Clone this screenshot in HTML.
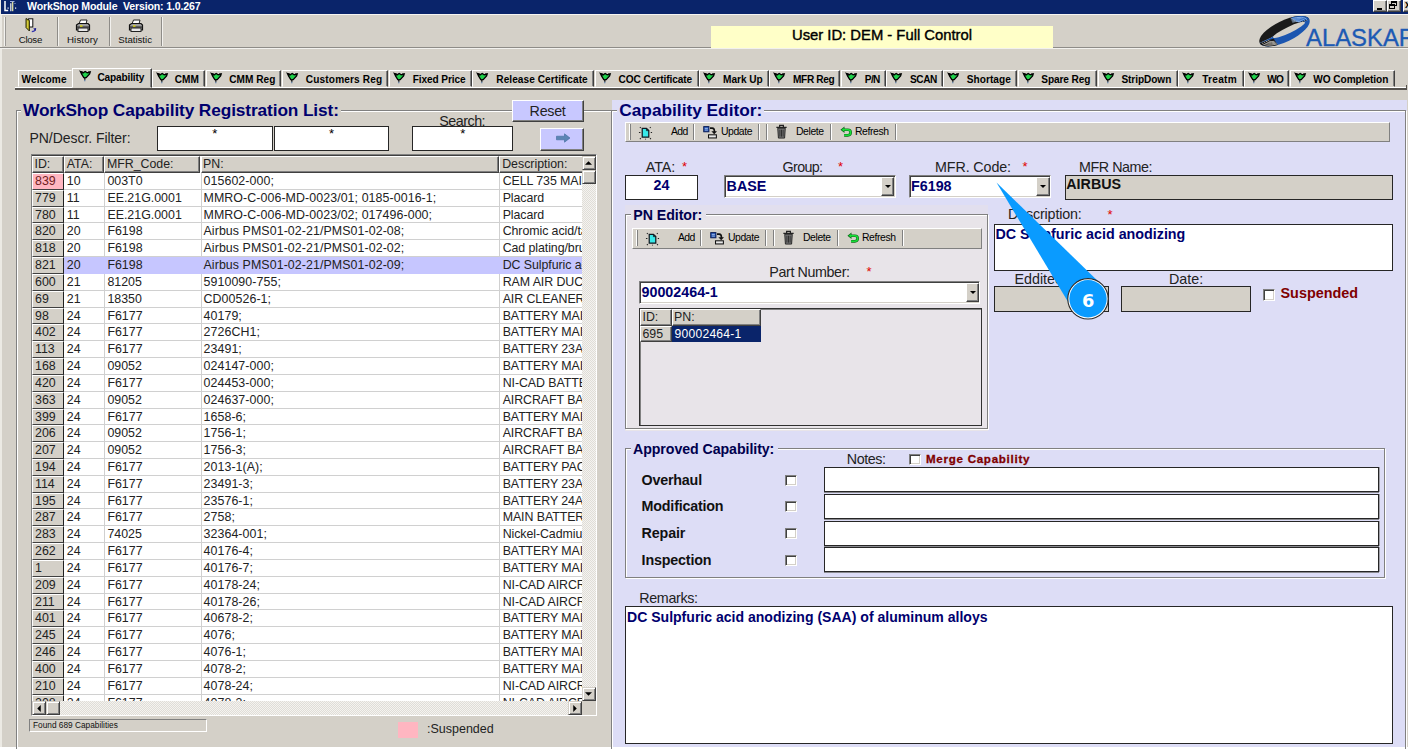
<!DOCTYPE html>
<html><head><meta charset="utf-8"><title>WorkShop Module</title>
<style>
html,body{margin:0;padding:0;background:#fff;}
#root{position:relative;width:1408px;height:749px;overflow:hidden;background:#fff;font-family:"Liberation Sans",sans-serif;font-size:12.1px;color:#000;}
#root *{box-sizing:border-box;}
#root div{position:absolute;}
#root svg{position:absolute;overflow:visible;}
.t{white-space:nowrap;line-height:1;}
.b{font-weight:bold;}
.navy{color:#00006E;}
.red{color:#E00000;}
.maroon{color:#800000;}
.face{background:#D4D0C8;}
.lav{background:#DDDDF6;}
.raised{border:1px solid;border-color:#fff #808080 #808080 #fff;}
.raised2{border:1px solid;border-color:#fff #404040 #404040 #fff;box-shadow:inset -1px -1px 0 #808080;}
.sunken{border:1px solid;border-color:#808080 #fff #fff #808080;box-shadow:inset 1px 1px 0 #404040;}
.sunk1{border:1px solid;border-color:#808080 #fff #fff #808080;}
.blk{border:1px solid #262626;}
.vsep{width:2px;border-left:1px solid #808080;border-right:1px solid #fff;}
.hsep{height:2px;border-top:1px solid #808080;border-bottom:1px solid #fff;}
.grp{border:1px solid #808080;box-shadow:1px 1px 0 #fff, inset 1px 1px 0 #fff;}
/* tabs */
.tab{top:70.4px;height:17px;background:#D4D0C8;border:1px solid;border-color:#fff #404040 transparent #fff;box-shadow:inset -1px 0 0 #808080;font-weight:bold;font-size:10.1px;white-space:nowrap;}
.tab span{position:absolute;top:3.2px;line-height:1;color:#000;}
.tab.sel{top:67.8px;height:20.4px;z-index:3;}
.tab.sel span{top:4.2px;}
.tab .flag{left:4px;top:1.2px;}
.tab.sel .flag{left:6.5px;top:2.4px;}
.tab.first{border-right-color:transparent;box-shadow:none;}
/* table */
.row{left:0;width:550px;height:16.83px;border-bottom:1px solid #D0D0D0;background:#fff;white-space:nowrap;line-height:17.6px;font-size:12.4px;color:#222;}
.row.sel{background:#C6C6FF;border-bottom-color:#C6C6FF;}
.row.sel .c{border-left-color:transparent;}
.row span{position:absolute;top:0;height:100%;overflow:hidden;padding-left:2px;}
.row .idc{left:0;width:32.3px;height:16.83px;background:#D4D0C8;border:1px solid;border-color:#fff #202020 #404040 #fff;border-right-width:1.3px;line-height:15.6px;padding-left:2px;}
.row .idc.susp{background:#FFB6C1;color:#702020;}
.row .c1{left:32.3px;width:41px;padding-left:2.5px;}
.row .c2{left:72.4px;width:97px;border-left:1px solid #D0D0D0;}
.row .c3{left:168.5px;width:298.7px;border-left:1px solid #D0D0D0;letter-spacing:0.08px;}
.row .c4{left:467.2px;width:83px;border-left:1px solid #D0D0D0;padding-left:2.5px;letter-spacing:-0.08px;}
.hdr{background:#D4D0C8;border:1px solid;border-color:#fff #404040 #404040 #fff;box-shadow:inset -1px -1px 0 #808080;font-size:12.35px;line-height:15px;padding-left:1.5px;white-space:nowrap;overflow:hidden;color:#222;}
.chk{background-color:#EAE8E4;background-image:conic-gradient(#F4F3F0 25%,#E0DDD7 0 50%,#F4F3F0 0 75%,#E0DDD7 0);background-size:2px 2px;}
.sbtn{background:#D4D0C8;border:1px solid;border-color:#D4D0C8 #404040 #404040 #D4D0C8;box-shadow:inset 1px 1px 0 #fff, inset -1px -1px 0 #808080;}
.tbtxt{font-size:10.6px;line-height:1;white-space:nowrap;}
.lbl{font-size:14.3px;line-height:1;white-space:nowrap;color:#222;}
.cb{width:12px;height:12px;background:#fff;border:1px solid;border-color:#808080 #fff #fff #808080;box-shadow:inset 1px 1px 0 #404040, inset -1px -1px 0 #D4D0C8;}
.combo{background:#fff;border:1px solid;border-color:#808080 #fff #fff #808080;box-shadow:inset 1px 1px 0 #404040, inset -1px -1px 0 #D4D0C8;}
.val{font-weight:bold;color:#00006E;font-size:14.3px;line-height:1;white-space:nowrap;}
.nb{box-shadow:0 1px 0 #8a8a90, 1px 0 0 #a0a0a8;}
</style></head>
<body>
<div id="root">

<!-- window frame / background -->
<div class="face" style="left:0;top:0;width:1408px;height:747.3px"></div>
<div style="left:0;top:0;width:1.5px;height:747px;background:#ECEAE4"></div>
<!-- title bar -->
<div style="left:1px;top:0;width:1407px;height:13.6px;background:#0A246A"></div>
<svg style="left:3px;top:0" width="15" height="13" viewBox="0 0 15 13"><path d="M2 1 V10.6 H5.2" stroke="#fff" stroke-width="1.5" fill="none"/><path d="M9.6 1.2 V11.2" stroke="#D8D8A0" stroke-width="1.5"/><path d="M7.8 3.2 V11.2" stroke="#fff" stroke-width="1.1"/><path d="M7 1.5 h4.5" stroke="#9fb0e0" stroke-width="1"/><rect x="4.5" y="7.5" width="1.2" height="1.2" fill="#fff"/><rect x="12" y="7.5" width="1.2" height="1.2" fill="#fff"/><rect x="11.5" y="3" width="1" height="1" fill="#9fb0e0"/></svg>
<div class="t b" id="title" style="left:27px;top:1px;color:#fff;font-size:10.6px;letter-spacing:-0.16px">WorkShop Module&nbsp; Version: 1.0.267</div>
<!-- window buttons -->
<div class="face raised2" style="left:1373px;top:0;width:14px;height:11.5px"></div>
<div style="left:1377px;top:7.8px;width:5px;height:2px;background:#000"></div>
<div class="face raised2" style="left:1387px;top:0;width:14px;height:11.5px"></div>
<div style="left:1391px;top:1px;width:6px;height:5px;border:1px solid #000;border-top-width:2px"></div>
<div style="left:1389px;top:4px;width:6px;height:5px;border:1px solid #000;border-top-width:2px;background:#D4D0C8"></div>
<div class="face raised2" style="left:1403px;top:0;width:13px;height:11.5px"></div>
<div class="t b" style="left:1405px;top:0px;font-size:10px;">x</div>
<div style="left:0;top:13.6px;width:1408px;height:1.9px;background:#F6F5F2"></div>

<!-- main toolbar -->
<div class="vsep" style="left:3.8px;top:17px;height:29px;border-left-color:#f4f3f0;border-right-color:#9a9894"></div>
<div class="vsep" style="left:57px;top:17px;height:29px;border-left-color:#8e8c88;border-right-color:#f2f1ee"></div>
<div class="vsep" style="left:109px;top:17px;height:29px;border-left-color:#8e8c88;border-right-color:#f2f1ee"></div>
<div class="vsep" style="left:161px;top:17px;height:29px;border-left-color:#8e8c88;border-right-color:#f2f1ee"></div>
<div class="hsep" style="left:0;top:47px;width:1408px;border-top-color:#8e8c88;border-bottom-color:#f2f1ee"></div>
<!-- close icon -->
<svg style="left:24px;top:17px" width="16" height="17" viewBox="0 0 16 17"><rect x="4.6" y="1.8" width="4.2" height="8.2" fill="#fff" stroke="#111" stroke-width="1"/><path d="M2 1.5 L5.4 3.4 V14 L2 10.6 Z" fill="#B4AC1C" stroke="#2a2a10" stroke-width="1"/><path d="M3.6 4 V11" stroke="#e0d850" stroke-width="0.8"/><path d="M7.8 14.6 q3 0 3.6 -2.4" stroke="#3838B0" stroke-width="1.3" fill="none"/><path d="M9.2 11.6 l3 -0.6 l-0.4 3 Z" fill="#202090"/></svg>
<div class="t" style="left:18.8px;top:35px;font-size:9.7px;color:#111;letter-spacing:-0.32px">Close</div>
<!-- printer icons -->
<svg style="left:75px;top:19px" width="16" height="14" viewBox="0 0 16 14"><path d="M4 5 L5.5 1 H12 L11 5 Z" fill="#fff" stroke="#222" stroke-width="1"/><path d="M1.5 6 L3.5 4.5 H13 L14.5 6 V11 H1.5 Z" fill="#9C9C9C" stroke="#111" stroke-width="1.2"/><path d="M1.5 8 H14.5" stroke="#222" stroke-width="1"/><rect x="3" y="9" width="10" height="3.5" fill="#E8E8E8" stroke="#222" stroke-width="1"/><rect x="5" y="6.4" width="2.5" height="1.3" fill="#E8E000"/></svg>
<div class="t" style="left:67px;top:35px;font-size:9.7px;color:#111;letter-spacing:0.12px">History</div>
<svg style="left:128px;top:19px" width="16" height="14" viewBox="0 0 16 14"><path d="M4 5 L5.5 1 H12 L11 5 Z" fill="#fff" stroke="#222" stroke-width="1"/><path d="M1.5 6 L3.5 4.5 H13 L14.5 6 V11 H1.5 Z" fill="#9C9C9C" stroke="#111" stroke-width="1.2"/><path d="M1.5 8 H14.5" stroke="#222" stroke-width="1"/><rect x="3" y="9" width="10" height="3.5" fill="#E8E8E8" stroke="#222" stroke-width="1"/><rect x="5" y="6.4" width="2.5" height="1.3" fill="#E8E000"/></svg>
<div class="t" style="left:118.3px;top:35px;font-size:9.7px;color:#111;letter-spacing:-0.03px">Statistic</div>

<!-- user id bar -->
<div style="left:711px;top:26px;width:342px;height:21.6px;background:#FFFFC8"></div>
<div class="t" style="left:711px;top:27.5px;width:342px;text-align:center;font-size:14.8px;color:#000;-webkit-text-stroke:0.4px #000">User ID: DEM - Full Control</div>

<!-- logo -->
<svg style="left:1255px;top:14px" width="153" height="34" viewBox="0 0 153 34">
<g transform="translate(29.5,17.2) rotate(-25.5)">
<path d="M-27.5 0 A27.5 10.6 0 0 1 27.5 0 Z" fill="#1a1a1a"/>
<path d="M27.5 0 A27.5 10.6 0 0 1 -27.5 0 Z" fill="#1C56B0"/>
<path d="M-27.5 0 A27.5 10.6 0 0 0 -12 9.5 L-13 2 Z" fill="#1a1a1a"/>
<path d="M27.5 0 A27.5 10.6 0 0 0 12 -9.5 L16 -2 Z" fill="#1C56B0"/>
<path d="M-25.4 0.5 A25.4 9.4 0 0 0 -12 8.4 M-23.2 0.6 A23.2 8.2 0 0 0 -12.5 7.2 M-21 0.7 A21 7 0 0 0 -13 6 M-18.8 0.8 A19 5.8 0 0 0 -13.5 4.8" stroke="#D4D0C8" stroke-width="0.65" fill="none"/>
<path d="M25.4 -0.5 A25.4 9.4 0 0 0 11 -8.5 M23.2 -0.6 A23.2 8.2 0 0 0 11 -7.2 M21 -0.7 A21 7 0 0 0 11 -6 M18.8 -0.8 A19 5.8 0 0 0 11 -4.8" stroke="#A8CCF8" stroke-width="0.65" fill="none"/>
<ellipse cx="4.6" cy="0.8" rx="17.6" ry="3.1" fill="#D4D0C8"/>
</g>
<text x="51" y="32.3" font-family="'Liberation Sans',sans-serif" font-size="24" fill="#1C5AB4" textLength="110" lengthAdjust="spacingAndGlyphs" stroke="#1C5AB4" stroke-width="0.35">ALASKAR</text>
</svg>

<!-- tab strip -->
<div style="left:15px;top:87px;width:1391px;height:1px;background:#fff"></div>
<div style="left:15px;top:88.2px;width:1392px;height:1.8px;background:#55524e"></div>
<div style="left:1405.5px;top:85px;width:1.5px;height:5px;background:#55524e;"></div>
<div class="tab first" style="left:17.5px;width:54.1px"><span style="left:3.0px;letter-spacing:0.15px">Welcome</span></div>
<div class="tab sel" style="left:72.2px;width:79.6px"><svg class="flag" width="11" height="11" viewBox="0 0 11 11"><path d="M0.5 0.6 L3 1.9 L5.2 0.5 L7.2 1.9 L10.2 0.9 L9.6 3 L6.2 6.6 L3.8 6.6 L1.8 3.4 Z" fill="#1FD04A" stroke="#000" stroke-width="1.3" stroke-linejoin="miter"/><path d="M0.3 0.3 h2.4 v1.6 h-1.4 Z M10.4 0.6 h-2.4 v1.6 h1.6 Z" fill="#000"/><path d="M4.8 6 V8.8" stroke="#111" stroke-width="1.4"/><path d="M4.8 8.8 V10.2" stroke="#5878A0" stroke-width="1.2"/></svg><span style="left:24.3px;letter-spacing:-0.16px">Capability</span></div>
<div class="tab" style="left:152.2px;width:52.7px"><svg class="flag" width="11" height="11" viewBox="0 0 11 11"><path d="M0.5 0.6 L3 1.9 L5.2 0.5 L7.2 1.9 L10.2 0.9 L9.6 3 L6.2 6.6 L3.8 6.6 L1.8 3.4 Z" fill="#1FD04A" stroke="#000" stroke-width="1.3" stroke-linejoin="miter"/><path d="M0.3 0.3 h2.4 v1.6 h-1.4 Z M10.4 0.6 h-2.4 v1.6 h1.6 Z" fill="#000"/><path d="M4.8 6 V8.8" stroke="#111" stroke-width="1.4"/><path d="M4.8 8.8 V10.2" stroke="#5878A0" stroke-width="1.2"/></svg><span style="left:21.5px;letter-spacing:0.06px">CMM</span></div>
<div class="tab" style="left:205.8px;width:75.6px"><svg class="flag" width="11" height="11" viewBox="0 0 11 11"><path d="M0.5 0.6 L3 1.9 L5.2 0.5 L7.2 1.9 L10.2 0.9 L9.6 3 L6.2 6.6 L3.8 6.6 L1.8 3.4 Z" fill="#1FD04A" stroke="#000" stroke-width="1.3" stroke-linejoin="miter"/><path d="M0.3 0.3 h2.4 v1.6 h-1.4 Z M10.4 0.6 h-2.4 v1.6 h1.6 Z" fill="#000"/><path d="M4.8 6 V8.8" stroke="#111" stroke-width="1.4"/><path d="M4.8 8.8 V10.2" stroke="#5878A0" stroke-width="1.2"/></svg><span style="left:22.5px;letter-spacing:0.01px">CMM Reg</span></div>
<div class="tab" style="left:282px;width:106.4px"><svg class="flag" width="11" height="11" viewBox="0 0 11 11"><path d="M0.5 0.6 L3 1.9 L5.2 0.5 L7.2 1.9 L10.2 0.9 L9.6 3 L6.2 6.6 L3.8 6.6 L1.8 3.4 Z" fill="#1FD04A" stroke="#000" stroke-width="1.3" stroke-linejoin="miter"/><path d="M0.3 0.3 h2.4 v1.6 h-1.4 Z M10.4 0.6 h-2.4 v1.6 h1.6 Z" fill="#000"/><path d="M4.8 6 V8.8" stroke="#111" stroke-width="1.4"/><path d="M4.8 8.8 V10.2" stroke="#5878A0" stroke-width="1.2"/></svg><span style="left:22.8px;letter-spacing:0.15px">Customers Reg</span></div>
<div class="tab" style="left:389px;width:82.9px"><svg class="flag" width="11" height="11" viewBox="0 0 11 11"><path d="M0.5 0.6 L3 1.9 L5.2 0.5 L7.2 1.9 L10.2 0.9 L9.6 3 L6.2 6.6 L3.8 6.6 L1.8 3.4 Z" fill="#1FD04A" stroke="#000" stroke-width="1.3" stroke-linejoin="miter"/><path d="M0.3 0.3 h2.4 v1.6 h-1.4 Z M10.4 0.6 h-2.4 v1.6 h1.6 Z" fill="#000"/><path d="M4.8 6 V8.8" stroke="#111" stroke-width="1.4"/><path d="M4.8 8.8 V10.2" stroke="#5878A0" stroke-width="1.2"/></svg><span style="left:22.8px;letter-spacing:-0.11px">Fixed Price</span></div>
<div class="tab" style="left:472.4px;width:121.4px"><svg class="flag" width="11" height="11" viewBox="0 0 11 11"><path d="M0.5 0.6 L3 1.9 L5.2 0.5 L7.2 1.9 L10.2 0.9 L9.6 3 L6.2 6.6 L3.8 6.6 L1.8 3.4 Z" fill="#1FD04A" stroke="#000" stroke-width="1.3" stroke-linejoin="miter"/><path d="M0.3 0.3 h2.4 v1.6 h-1.4 Z M10.4 0.6 h-2.4 v1.6 h1.6 Z" fill="#000"/><path d="M4.8 6 V8.8" stroke="#111" stroke-width="1.4"/><path d="M4.8 8.8 V10.2" stroke="#5878A0" stroke-width="1.2"/></svg><span style="left:22.9px;letter-spacing:0.06px">Release Certificate</span></div>
<div class="tab" style="left:594.8px;width:103.8px"><svg class="flag" width="11" height="11" viewBox="0 0 11 11"><path d="M0.5 0.6 L3 1.9 L5.2 0.5 L7.2 1.9 L10.2 0.9 L9.6 3 L6.2 6.6 L3.8 6.6 L1.8 3.4 Z" fill="#1FD04A" stroke="#000" stroke-width="1.3" stroke-linejoin="miter"/><path d="M0.3 0.3 h2.4 v1.6 h-1.4 Z M10.4 0.6 h-2.4 v1.6 h1.6 Z" fill="#000"/><path d="M4.8 6 V8.8" stroke="#111" stroke-width="1.4"/><path d="M4.8 8.8 V10.2" stroke="#5878A0" stroke-width="1.2"/></svg><span style="left:22.8px;letter-spacing:-0.07px">COC Certificate</span></div>
<div class="tab" style="left:699.2px;width:69.6px"><svg class="flag" width="11" height="11" viewBox="0 0 11 11"><path d="M0.5 0.6 L3 1.9 L5.2 0.5 L7.2 1.9 L10.2 0.9 L9.6 3 L6.2 6.6 L3.8 6.6 L1.8 3.4 Z" fill="#1FD04A" stroke="#000" stroke-width="1.3" stroke-linejoin="miter"/><path d="M0.3 0.3 h2.4 v1.6 h-1.4 Z M10.4 0.6 h-2.4 v1.6 h1.6 Z" fill="#000"/><path d="M4.8 6 V8.8" stroke="#111" stroke-width="1.4"/><path d="M4.8 8.8 V10.2" stroke="#5878A0" stroke-width="1.2"/></svg><span style="left:22.8px;letter-spacing:-0.01px">Mark Up</span></div>
<div class="tab" style="left:769.3px;width:71.2px"><svg class="flag" width="11" height="11" viewBox="0 0 11 11"><path d="M0.5 0.6 L3 1.9 L5.2 0.5 L7.2 1.9 L10.2 0.9 L9.6 3 L6.2 6.6 L3.8 6.6 L1.8 3.4 Z" fill="#1FD04A" stroke="#000" stroke-width="1.3" stroke-linejoin="miter"/><path d="M0.3 0.3 h2.4 v1.6 h-1.4 Z M10.4 0.6 h-2.4 v1.6 h1.6 Z" fill="#000"/><path d="M4.8 6 V8.8" stroke="#111" stroke-width="1.4"/><path d="M4.8 8.8 V10.2" stroke="#5878A0" stroke-width="1.2"/></svg><span style="left:22.7px;letter-spacing:-0.34px">MFR Reg</span></div>
<div class="tab" style="left:841.3px;width:44.4px"><svg class="flag" width="11" height="11" viewBox="0 0 11 11"><path d="M0.5 0.6 L3 1.9 L5.2 0.5 L7.2 1.9 L10.2 0.9 L9.6 3 L6.2 6.6 L3.8 6.6 L1.8 3.4 Z" fill="#1FD04A" stroke="#000" stroke-width="1.3" stroke-linejoin="miter"/><path d="M0.3 0.3 h2.4 v1.6 h-1.4 Z M10.4 0.6 h-2.4 v1.6 h1.6 Z" fill="#000"/><path d="M4.8 6 V8.8" stroke="#111" stroke-width="1.4"/><path d="M4.8 8.8 V10.2" stroke="#5878A0" stroke-width="1.2"/></svg><span style="left:22.5px;letter-spacing:-0.65px">P/N</span></div>
<div class="tab" style="left:886.3px;width:56.4px"><svg class="flag" width="11" height="11" viewBox="0 0 11 11"><path d="M0.5 0.6 L3 1.9 L5.2 0.5 L7.2 1.9 L10.2 0.9 L9.6 3 L6.2 6.6 L3.8 6.6 L1.8 3.4 Z" fill="#1FD04A" stroke="#000" stroke-width="1.3" stroke-linejoin="miter"/><path d="M0.3 0.3 h2.4 v1.6 h-1.4 Z M10.4 0.6 h-2.4 v1.6 h1.6 Z" fill="#000"/><path d="M4.8 6 V8.8" stroke="#111" stroke-width="1.4"/><path d="M4.8 8.8 V10.2" stroke="#5878A0" stroke-width="1.2"/></svg><span style="left:22.8px;letter-spacing:-0.48px">SCAN</span></div>
<div class="tab" style="left:943.3px;width:74.0px"><svg class="flag" width="11" height="11" viewBox="0 0 11 11"><path d="M0.5 0.6 L3 1.9 L5.2 0.5 L7.2 1.9 L10.2 0.9 L9.6 3 L6.2 6.6 L3.8 6.6 L1.8 3.4 Z" fill="#1FD04A" stroke="#000" stroke-width="1.3" stroke-linejoin="miter"/><path d="M0.3 0.3 h2.4 v1.6 h-1.4 Z M10.4 0.6 h-2.4 v1.6 h1.6 Z" fill="#000"/><path d="M4.8 6 V8.8" stroke="#111" stroke-width="1.4"/><path d="M4.8 8.8 V10.2" stroke="#5878A0" stroke-width="1.2"/></svg><span style="left:22.5px;letter-spacing:0.04px">Shortage</span></div>
<div class="tab" style="left:1017.9px;width:79.1px"><svg class="flag" width="11" height="11" viewBox="0 0 11 11"><path d="M0.5 0.6 L3 1.9 L5.2 0.5 L7.2 1.9 L10.2 0.9 L9.6 3 L6.2 6.6 L3.8 6.6 L1.8 3.4 Z" fill="#1FD04A" stroke="#000" stroke-width="1.3" stroke-linejoin="miter"/><path d="M0.3 0.3 h2.4 v1.6 h-1.4 Z M10.4 0.6 h-2.4 v1.6 h1.6 Z" fill="#000"/><path d="M4.8 6 V8.8" stroke="#111" stroke-width="1.4"/><path d="M4.8 8.8 V10.2" stroke="#5878A0" stroke-width="1.2"/></svg><span style="left:22.4px;letter-spacing:-0.10px">Spare Reg</span></div>
<div class="tab" style="left:1097.6px;width:80.1px"><svg class="flag" width="11" height="11" viewBox="0 0 11 11"><path d="M0.5 0.6 L3 1.9 L5.2 0.5 L7.2 1.9 L10.2 0.9 L9.6 3 L6.2 6.6 L3.8 6.6 L1.8 3.4 Z" fill="#1FD04A" stroke="#000" stroke-width="1.3" stroke-linejoin="miter"/><path d="M0.3 0.3 h2.4 v1.6 h-1.4 Z M10.4 0.6 h-2.4 v1.6 h1.6 Z" fill="#000"/><path d="M4.8 6 V8.8" stroke="#111" stroke-width="1.4"/><path d="M4.8 8.8 V10.2" stroke="#5878A0" stroke-width="1.2"/></svg><span style="left:22.8px;letter-spacing:-0.07px">StripDown</span></div>
<div class="tab" style="left:1178.3px;width:65.4px"><svg class="flag" width="11" height="11" viewBox="0 0 11 11"><path d="M0.5 0.6 L3 1.9 L5.2 0.5 L7.2 1.9 L10.2 0.9 L9.6 3 L6.2 6.6 L3.8 6.6 L1.8 3.4 Z" fill="#1FD04A" stroke="#000" stroke-width="1.3" stroke-linejoin="miter"/><path d="M0.3 0.3 h2.4 v1.6 h-1.4 Z M10.4 0.6 h-2.4 v1.6 h1.6 Z" fill="#000"/><path d="M4.8 6 V8.8" stroke="#111" stroke-width="1.4"/><path d="M4.8 8.8 V10.2" stroke="#5878A0" stroke-width="1.2"/></svg><span style="left:22.9px;letter-spacing:0.28px">Treatm</span></div>
<div class="tab" style="left:1244.3px;width:44.7px"><svg class="flag" width="11" height="11" viewBox="0 0 11 11"><path d="M0.5 0.6 L3 1.9 L5.2 0.5 L7.2 1.9 L10.2 0.9 L9.6 3 L6.2 6.6 L3.8 6.6 L1.8 3.4 Z" fill="#1FD04A" stroke="#000" stroke-width="1.3" stroke-linejoin="miter"/><path d="M0.3 0.3 h2.4 v1.6 h-1.4 Z M10.4 0.6 h-2.4 v1.6 h1.6 Z" fill="#000"/><path d="M4.8 6 V8.8" stroke="#111" stroke-width="1.4"/><path d="M4.8 8.8 V10.2" stroke="#5878A0" stroke-width="1.2"/></svg><span style="left:21.9px;letter-spacing:-0.79px">WO</span></div>
<div class="tab" style="left:1289.6px;width:105.4px"><svg class="flag" width="11" height="11" viewBox="0 0 11 11"><path d="M0.5 0.6 L3 1.9 L5.2 0.5 L7.2 1.9 L10.2 0.9 L9.6 3 L6.2 6.6 L3.8 6.6 L1.8 3.4 Z" fill="#1FD04A" stroke="#000" stroke-width="1.3" stroke-linejoin="miter"/><path d="M0.3 0.3 h2.4 v1.6 h-1.4 Z M10.4 0.6 h-2.4 v1.6 h1.6 Z" fill="#000"/><path d="M4.8 6 V8.8" stroke="#111" stroke-width="1.4"/><path d="M4.8 8.8 V10.2" stroke="#5878A0" stroke-width="1.2"/></svg><span style="left:22.7px;letter-spacing:-0.05px">WO Completion</span></div>


<!-- ===== LEFT PANEL ===== -->
<div class="grp" style="left:15.5px;top:109.5px;width:596px;height:660px"></div>
<div class="face" style="left:21px;top:105px;width:320px;height:8px"></div>
<div class="t b navy" style="left:23px;top:101.9px;font-size:17.3px;letter-spacing:-0.12px">WorkShop Capability Registration List:</div>
<div class="t lbl" style="left:29.5px;top:130.8px;font-size:14px;letter-spacing:-0.05px">PN/Descr. Filter:</div>
<div class="blk" style="left:157px;top:126px;width:115.5px;height:25px;background:#fff"></div>
<div class="t" style="left:157px;top:126.5px;width:115.5px;text-align:center;font-size:13px">*</div>
<div class="blk" style="left:274px;top:126px;width:115px;height:25px;background:#fff"></div>
<div class="t" style="left:274px;top:126.5px;width:115px;text-align:center;font-size:13px">*</div>
<div class="t lbl" style="left:439.3px;top:114px;font-size:14.3px;letter-spacing:-0.50px">Search:</div>
<div class="blk" style="left:412px;top:126px;width:100.8px;height:25px;background:#fff"></div>
<div class="t" style="left:412px;top:126.5px;width:101.5px;text-align:center;font-size:13px">*</div>
<div class="raised2" style="left:512px;top:100px;width:72px;height:22px;background:#C8C8FF"></div>
<div class="t" style="left:529.6px;top:103.8px;font-size:14.3px;color:#222;letter-spacing:-0.29px">Reset</div>
<div class="raised2" style="left:540px;top:128px;width:44px;height:22.5px;background:#C8C8FF"></div>
<svg style="left:555.5px;top:133px" width="15" height="10" viewBox="0 0 15 10"><path d="M0.5 3.2 H8.5 V0.8 L14 5 L8.5 9.2 V6.8 H0.5 Z" fill="#5C86B4" stroke="#3E6A9C" stroke-width="0.6"/></svg>

<!-- grid -->
<div class="sunken" style="left:30.7px;top:154.3px;width:566.5px;height:562px;background:#fff"></div>
<div id="grid" style="left:32px;top:155.7px;width:549.7px;height:545.3px;overflow:hidden;background:#fff">
<div class="hdr" style="left:0;top:0;width:32.3px;height:17.2px">ID:</div>
<div class="hdr" style="left:32.3px;top:0;width:40.1px;height:17.2px">ATA:</div>
<div class="hdr" style="left:72.4px;top:0;width:96.1px;height:17.2px">MFR_Code:</div>
<div class="hdr" style="left:168.5px;top:0;width:298.7px;height:17.2px">PN:</div>
<div class="hdr" style="left:467.2px;top:0;width:100px;height:17.2px;padding-left:2px">Description:</div>
<div class="row" style="top:17.20px"><span class="idc susp">839</span><span class="c c1">10</span><span class="c c2">003T0</span><span class="c c3">015602-000;</span><span class="c c4">CELL 735 MAIN</span></div>
<div class="row" style="top:34.03px"><span class="idc">779</span><span class="c c1">11</span><span class="c c2">EE.21G.0001</span><span class="c c3">MMRO-C-006-MD-0023/01; 0185-0016-1;</span><span class="c c4">Placard</span></div>
<div class="row" style="top:50.86px"><span class="idc">780</span><span class="c c1">11</span><span class="c c2">EE.21G.0001</span><span class="c c3">MMRO-C-006-MD-0023/02; 017496-000;</span><span class="c c4">Placard</span></div>
<div class="row" style="top:67.69px"><span class="idc">820</span><span class="c c1">20</span><span class="c c2">F6198</span><span class="c c3">Airbus PMS01-02-21/PMS01-02-08;</span><span class="c c4">Chromic acid/tartaric</span></div>
<div class="row" style="top:84.52px"><span class="idc">818</span><span class="c c1">20</span><span class="c c2">F6198</span><span class="c c3">Airbus PMS01-02-21/PMS01-02-02;</span><span class="c c4">Cad plating/brush</span></div>
<div class="row sel" style="top:101.35px"><span class="idc">821</span><span class="c c1">20</span><span class="c c2">F6198</span><span class="c c3">Airbus PMS01-02-21/PMS01-02-09;</span><span class="c c4">DC Sulpfuric acid</span></div>
<div class="row" style="top:118.18px"><span class="idc">600</span><span class="c c1">21</span><span class="c c2">81205</span><span class="c c3">5910090-755;</span><span class="c c4">RAM AIR DUCT</span></div>
<div class="row" style="top:135.01px"><span class="idc">69</span><span class="c c1">21</span><span class="c c2">18350</span><span class="c c3">CD00526-1;</span><span class="c c4">AIR CLEANER</span></div>
<div class="row" style="top:151.84px"><span class="idc">98</span><span class="c c1">24</span><span class="c c2">F6177</span><span class="c c3">40179;</span><span class="c c4">BATTERY MAIN</span></div>
<div class="row" style="top:168.67px"><span class="idc">402</span><span class="c c1">24</span><span class="c c2">F6177</span><span class="c c3">2726CH1;</span><span class="c c4">BATTERY MAIN</span></div>
<div class="row" style="top:185.50px"><span class="idc">113</span><span class="c c1">24</span><span class="c c2">F6177</span><span class="c c3">23491;</span><span class="c c4">BATTERY 23AH</span></div>
<div class="row" style="top:202.33px"><span class="idc">168</span><span class="c c1">24</span><span class="c c2">09052</span><span class="c c3">024147-000;</span><span class="c c4">BATTERY MAIN</span></div>
<div class="row" style="top:219.16px"><span class="idc">420</span><span class="c c1">24</span><span class="c c2">F6177</span><span class="c c3">024453-000;</span><span class="c c4">NI-CAD BATTERY</span></div>
<div class="row" style="top:235.99px"><span class="idc">363</span><span class="c c1">24</span><span class="c c2">09052</span><span class="c c3">024637-000;</span><span class="c c4">AIRCRAFT BATTERY</span></div>
<div class="row" style="top:252.82px"><span class="idc">399</span><span class="c c1">24</span><span class="c c2">F6177</span><span class="c c3">1658-6;</span><span class="c c4">BATTERY MAIN</span></div>
<div class="row" style="top:269.65px"><span class="idc">206</span><span class="c c1">24</span><span class="c c2">09052</span><span class="c c3">1756-1;</span><span class="c c4">AIRCRAFT BATTERY</span></div>
<div class="row" style="top:286.48px"><span class="idc">207</span><span class="c c1">24</span><span class="c c2">09052</span><span class="c c3">1756-3;</span><span class="c c4">AIRCRAFT BATTERY</span></div>
<div class="row" style="top:303.31px"><span class="idc">194</span><span class="c c1">24</span><span class="c c2">F6177</span><span class="c c3">2013-1(A);</span><span class="c c4">BATTERY PACK</span></div>
<div class="row" style="top:320.14px"><span class="idc">114</span><span class="c c1">24</span><span class="c c2">F6177</span><span class="c c3">23491-3;</span><span class="c c4">BATTERY 23AH</span></div>
<div class="row" style="top:336.97px"><span class="idc">195</span><span class="c c1">24</span><span class="c c2">F6177</span><span class="c c3">23576-1;</span><span class="c c4">BATTERY 24AH</span></div>
<div class="row" style="top:353.80px"><span class="idc">287</span><span class="c c1">24</span><span class="c c2">F6177</span><span class="c c3">2758;</span><span class="c c4">MAIN BATTERY</span></div>
<div class="row" style="top:370.63px"><span class="idc">283</span><span class="c c1">24</span><span class="c c2">74025</span><span class="c c3">32364-001;</span><span class="c c4">Nickel-Cadmium</span></div>
<div class="row" style="top:387.46px"><span class="idc">262</span><span class="c c1">24</span><span class="c c2">F6177</span><span class="c c3">40176-4;</span><span class="c c4">BATTERY MAIN</span></div>
<div class="row" style="top:404.29px"><span class="idc">1</span><span class="c c1">24</span><span class="c c2">F6177</span><span class="c c3">40176-7;</span><span class="c c4">BATTERY MAIN</span></div>
<div class="row" style="top:421.12px"><span class="idc">209</span><span class="c c1">24</span><span class="c c2">F6177</span><span class="c c3">40178-24;</span><span class="c c4">NI-CAD AIRCRAFT</span></div>
<div class="row" style="top:437.95px"><span class="idc">211</span><span class="c c1">24</span><span class="c c2">F6177</span><span class="c c3">40178-26;</span><span class="c c4">NI-CAD AIRCRAFT</span></div>
<div class="row" style="top:454.78px"><span class="idc">401</span><span class="c c1">24</span><span class="c c2">F6177</span><span class="c c3">40678-2;</span><span class="c c4">BATTERY MAIN</span></div>
<div class="row" style="top:471.61px"><span class="idc">245</span><span class="c c1">24</span><span class="c c2">F6177</span><span class="c c3">4076;</span><span class="c c4">BATTERY MAIN</span></div>
<div class="row" style="top:488.44px"><span class="idc">246</span><span class="c c1">24</span><span class="c c2">F6177</span><span class="c c3">4076-1;</span><span class="c c4">BATTERY MAIN</span></div>
<div class="row" style="top:505.27px"><span class="idc">400</span><span class="c c1">24</span><span class="c c2">F6177</span><span class="c c3">4078-2;</span><span class="c c4">BATTERY MAIN</span></div>
<div class="row" style="top:522.10px"><span class="idc">210</span><span class="c c1">24</span><span class="c c2">F6177</span><span class="c c3">4078-24;</span><span class="c c4">NI-CAD AIRCRAFT</span></div>
<div class="row" style="top:538.93px"><span class="idc">208</span><span class="c c1">24</span><span class="c c2">F6177</span><span class="c c3">4078-3;</span><span class="c c4">NI-CAD AIRCRAFT</span></div>

</div>
<!-- v scrollbar -->
<div class="chk" style="left:581.7px;top:155.7px;width:14px;height:545.3px"></div>
<div class="sbtn" style="left:581.7px;top:155.7px;width:14px;height:14px"></div>
<svg style="left:585.2px;top:160.5px" width="7" height="4" viewBox="0 0 8 4"><path d="M0 4 L8 4 L4 0 Z" fill="#000"/></svg>
<div class="sbtn" style="left:581.7px;top:169.7px;width:14px;height:14.3px"></div>
<div class="sbtn" style="left:581.7px;top:687px;width:14px;height:14px"></div>
<svg style="left:585.2px;top:692px" width="7" height="4" viewBox="0 0 8 4"><path d="M0 0 L8 0 L4 4 Z" fill="#000"/></svg>
<!-- h scrollbar -->
<div class="chk" style="left:32px;top:701px;width:549.7px;height:14px"></div>
<div class="sbtn" style="left:32px;top:701px;width:14px;height:14px"></div>
<svg style="left:36.5px;top:704.5px" width="4" height="7" viewBox="0 0 4 8"><path d="M4 0 L4 8 L0 4 Z" fill="#000"/></svg>
<div class="sbtn" style="left:46px;top:701px;width:14px;height:14px"></div>
<div class="sbtn" style="left:567.7px;top:701px;width:14px;height:14px"></div>
<svg style="left:573px;top:704.5px" width="4" height="7" viewBox="0 0 4 8"><path d="M0 0 L0 8 L4 4 Z" fill="#000"/></svg>
<div class="face" style="left:581.7px;top:701px;width:14px;height:14px"></div>
<!-- status -->
<div class="sunk1" style="left:29px;top:718.5px;width:178px;height:13px"></div>
<div class="t" style="left:33px;top:721px;font-size:8.3px;color:#111">Found 689 Capabilities</div>
<div style="left:398px;top:722px;width:20px;height:16px;background:#FFB6C1"></div>
<div class="t" style="left:427px;top:723px;font-size:12.5px;color:#222">:Suspended</div>

<!-- ===== RIGHT PANEL ===== -->
<div class="lav" style="left:612px;top:99.7px;width:794.6px;height:647.6px"></div>
<div class="grp" style="left:611.4px;top:110px;width:795px;height:660px;"></div>
<div class="lav" style="left:617px;top:106px;width:147px;height:8px"></div>
<div class="t b navy" style="left:619.3px;top:101.9px;font-size:17.3px;letter-spacing:-0.01px">Capability Editor:</div>

<!-- capability toolbar -->
<div class="face raised" style="left:625px;top:121.5px;width:764.5px;height:20.5px"></div>
<div class="vsep" style="left:628.5px;top:124px;height:16px;border-left-color:#fff;border-right-color:#808080"></div>
<svg style="left:638px;top:124.5px" width="15" height="15" viewBox="0 0 16 16"><path d="M4.5 3.5 H9 L11.5 6 V13 H4.5 Z" fill="#38E8E8" stroke="#101820" stroke-width="1.3"/><path d="M9 3.5 V6 H11.5" stroke="#101820" stroke-width="0.9" fill="none"/><path d="M2 2.2 l1 1 M13.6 2.2 l-1 1 M1 8 h1.6 M13.6 8 h1.4 M2 15 l1 -1 M13.8 15 l-1 -1 M8 15.5 v-0.8" stroke="#222" stroke-width="1.1" fill="none"/></svg>
<div class="t tbtxt" style="left:671px;top:126.6px;font-size:10.4px;letter-spacing:-0.63px">Add</div>
<div class="vsep" style="left:693px;top:124px;height:16px"></div>
<svg style="left:703px;top:124.5px" width="14" height="14" viewBox="0 0 16 16"><rect x="0.8" y="1.8" width="6" height="6" fill="#1848A8" stroke="#0A1A50" stroke-width="1"/><path d="M2 3.8 h3.6 M2 5.8 h3.6" stroke="#CFE0FF" stroke-width="0.9"/><path d="M8 3.5 h2.5 q2.5 0.3 2.5 3.2 v1.2" stroke="#111" stroke-width="1.9" fill="none"/><path d="M9.6 7.2 h6.4 l-3.2 3.4 Z" fill="#111"/><rect x="6.3" y="11.2" width="9" height="3.6" fill="#E8E8E8" stroke="#111" stroke-width="1.2"/></svg>
<div class="t tbtxt" style="left:721px;top:126.6px;font-size:10.4px;letter-spacing:-0.42px">Update</div>
<div class="vsep" style="left:758px;top:124px;height:16px"></div>
<div class="vsep" style="left:765.5px;top:124px;height:16px"></div>
<svg style="left:774px;top:124px" width="15" height="15" viewBox="0 0 16 16"><path d="M4 4.5 H12 L11.3 15 H4.7 Z" fill="#787878" stroke="#222" stroke-width="1"/><path d="M2.5 3.5 H13.5 M6 3 V1.5 H10 V3" stroke="#222" stroke-width="1.3" fill="none"/><path d="M6.3 6 V13.5 M8 6 V13.5 M9.7 6 V13.5" stroke="#222" stroke-width="0.9"/></svg>
<div class="t tbtxt" style="left:796px;top:126.6px;font-size:10.4px;letter-spacing:-0.38px">Delete</div>
<div class="vsep" style="left:830px;top:124px;height:16px"></div>
<svg style="left:840px;top:125.8px" width="12" height="12" viewBox="0 0 16 16"><path d="M4 5 H10.5 A3.6 3.6 0 0 1 10.5 12.4 H5.5" stroke="#0A6A18" stroke-width="3.6" fill="none"/><path d="M0.6 5 L6 0.8 V9.2 Z" fill="#0A6A18"/><path d="M4 5 H10.5 A3.6 3.6 0 0 1 10.5 12.4 H5.5" stroke="#18E038" stroke-width="1.9" fill="none"/><path d="M2.2 5 L5.3 2.6 V7.4 Z" fill="#18E038"/></svg>
<div class="t tbtxt" style="left:855px;top:126.6px;font-size:10.4px;letter-spacing:-0.40px">Refresh</div>
<div class="vsep" style="left:894.5px;top:124px;height:16px"></div>

<!-- row 1 fields -->
<div class="t lbl" style="left:645.8px;top:160px;font-size:14.3px;letter-spacing:-0.04px">ATA:</div>
<div class="t red" style="left:682px;top:160px;font-size:13px">*</div>
<div class="blk" style="left:625px;top:174.5px;width:73px;height:25.5px;background:#fff"></div>
<div class="t val" style="left:625px;top:177.5px;width:73px;text-align:center">24</div>

<div class="t lbl" style="left:782.6px;top:160px;font-size:14.3px;letter-spacing:-0.65px">Group:</div>
<div class="t red" style="left:838px;top:160px;font-size:13px">*</div>
<div class="combo" style="left:724px;top:174.5px;width:171.5px;height:23px"></div>
<div class="t val" style="left:726.6px;top:178.5px">BASE</div>
<div class="face raised2" style="left:880.5px;top:176.5px;width:13.5px;height:19px"></div>
<svg style="left:884.5px;top:184.5px" width="6" height="3" viewBox="0 0 8 4"><path d="M0 0 L8 0 L4 4 Z" fill="#000"/></svg>

<div class="t lbl" style="left:935px;top:160px;font-size:14.3px;letter-spacing:-0.11px">MFR. Code:</div>
<div class="t red" style="left:1022.5px;top:160px;font-size:13px">*</div>
<div class="combo" style="left:909px;top:174.5px;width:142px;height:23px"></div>
<div class="t val" style="left:911px;top:178.5px">F6198</div>
<div class="face raised2" style="left:1036px;top:176.5px;width:13.5px;height:19px"></div>
<svg style="left:1040px;top:184.5px" width="6" height="3" viewBox="0 0 8 4"><path d="M0 0 L8 0 L4 4 Z" fill="#000"/></svg>

<div class="t lbl" style="left:1079px;top:160px;font-size:14.3px;letter-spacing:-0.45px">MFR Name:</div>
<div class="blk face" style="left:1065px;top:174.5px;width:328px;height:25.5px"></div>
<div class="t b" style="left:1066.3px;top:177px;font-size:14.3px;color:#111">AIRBUS</div>

<!-- PN editor -->
<div style="left:625px;top:205px;width:363px;height:10px;background:#E2DFEE"></div>
<div style="left:625px;top:214px;width:363px;height:216.5px;background:#E8E4E9"></div>
<div class="grp" style="left:625px;top:214.2px;width:362.5px;height:215.2px;"></div>
<div style="left:630.5px;top:210px;width:75px;height:8px;background:#E4E1EC"></div>
<div class="t b" style="left:633.3px;top:207.6px;font-size:14.2px;color:#00004E;letter-spacing:-0.06px">PN Editor:</div>
<div class="face raised" style="left:632px;top:227.8px;width:350px;height:20.8px"></div>
<div class="vsep" style="left:635.5px;top:230px;height:16px;border-left-color:#fff;border-right-color:#808080"></div>
<svg style="left:645px;top:230.5px" width="15" height="15" viewBox="0 0 16 16"><path d="M4.5 3.5 H9 L11.5 6 V13 H4.5 Z" fill="#38E8E8" stroke="#101820" stroke-width="1.3"/><path d="M9 3.5 V6 H11.5" stroke="#101820" stroke-width="0.9" fill="none"/><path d="M2 2.2 l1 1 M13.6 2.2 l-1 1 M1 8 h1.6 M13.6 8 h1.4 M2 15 l1 -1 M13.8 15 l-1 -1 M8 15.5 v-0.8" stroke="#222" stroke-width="1.1" fill="none"/></svg>
<div class="t tbtxt" style="left:678px;top:232.6px;font-size:10.4px;letter-spacing:-0.63px">Add</div>
<div class="vsep" style="left:700px;top:230px;height:16px"></div>
<svg style="left:710px;top:230.5px" width="14" height="14" viewBox="0 0 16 16"><rect x="0.8" y="1.8" width="6" height="6" fill="#1848A8" stroke="#0A1A50" stroke-width="1"/><path d="M2 3.8 h3.6 M2 5.8 h3.6" stroke="#CFE0FF" stroke-width="0.9"/><path d="M8 3.5 h2.5 q2.5 0.3 2.5 3.2 v1.2" stroke="#111" stroke-width="1.9" fill="none"/><path d="M9.6 7.2 h6.4 l-3.2 3.4 Z" fill="#111"/><rect x="6.3" y="11.2" width="9" height="3.6" fill="#E8E8E8" stroke="#111" stroke-width="1.2"/></svg>
<div class="t tbtxt" style="left:728px;top:232.6px;font-size:10.4px;letter-spacing:-0.42px">Update</div>
<div class="vsep" style="left:765px;top:230px;height:16px"></div>
<div class="vsep" style="left:772.5px;top:230px;height:16px"></div>
<svg style="left:781px;top:230px" width="15" height="15" viewBox="0 0 16 16"><path d="M4 4.5 H12 L11.3 15 H4.7 Z" fill="#787878" stroke="#222" stroke-width="1"/><path d="M2.5 3.5 H13.5 M6 3 V1.5 H10 V3" stroke="#222" stroke-width="1.3" fill="none"/><path d="M6.3 6 V13.5 M8 6 V13.5 M9.7 6 V13.5" stroke="#222" stroke-width="0.9"/></svg>
<div class="t tbtxt" style="left:803px;top:232.6px;font-size:10.4px;letter-spacing:-0.38px">Delete</div>
<div class="vsep" style="left:837px;top:230px;height:16px"></div>
<svg style="left:847px;top:231.8px" width="12" height="12" viewBox="0 0 16 16"><path d="M4 5 H10.5 A3.6 3.6 0 0 1 10.5 12.4 H5.5" stroke="#0A6A18" stroke-width="3.6" fill="none"/><path d="M0.6 5 L6 0.8 V9.2 Z" fill="#0A6A18"/><path d="M4 5 H10.5 A3.6 3.6 0 0 1 10.5 12.4 H5.5" stroke="#18E038" stroke-width="1.9" fill="none"/><path d="M2.2 5 L5.3 2.6 V7.4 Z" fill="#18E038"/></svg>
<div class="t tbtxt" style="left:862px;top:232.6px;font-size:10.4px;letter-spacing:-0.40px">Refresh</div>
<div class="vsep" style="left:901.5px;top:230px;height:16px"></div>

<div class="t lbl" style="left:769.3px;top:265.3px;font-size:14.3px;letter-spacing:-0.39px">Part Number:</div>
<div class="t red" style="left:866.5px;top:265px;font-size:13px">*</div>
<div class="combo" style="left:638.8px;top:281px;width:341.7px;height:22.5px"></div>
<div class="t val" style="left:641.5px;top:285px">90002464-1</div>
<div class="face raised2" style="left:965.5px;top:283px;width:13.5px;height:18.5px"></div>
<svg style="left:969.5px;top:290.5px" width="6" height="3" viewBox="0 0 8 4"><path d="M0 0 L8 0 L4 4 Z" fill="#000"/></svg>
<!-- pn grid -->
<div style="left:638.8px;top:308px;width:343.2px;height:118px;background:#E8E4E9;border:1px solid #303030;box-shadow:inset 1px 1px 0 #808080"></div>
<div class="hdr" style="left:640px;top:309px;width:31.5px;height:16.6px">ID:</div>
<div class="hdr" style="left:671.5px;top:309px;width:89.5px;height:16.6px">PN:</div>
<div class="hdr" style="left:640px;top:325.6px;width:31.5px;height:16.8px">695</div>
<div style="left:671.5px;top:325.6px;width:89.5px;height:16.8px;background:#0A246A;color:#fff;font-size:12.1px;line-height:17px;padding-left:3px;white-space:nowrap;letter-spacing:0.25px">90002464-1</div>

<!-- description -->
<div class="t lbl" style="left:1008px;top:207.3px;font-size:14.3px;letter-spacing:-0.15px">Description:</div>
<div class="t red" style="left:1107.5px;top:208px;font-size:13px">*</div>
<div class="blk" style="left:993.5px;top:224px;width:399.5px;height:46.5px;background:#fff"></div>
<div class="t val" style="left:995.5px;top:226.5px">DC Sulpfuric acid anodizing</div>
<div class="t lbl" style="left:1014.5px;top:271.5px;font-size:14.3px">Eddited by:</div>
<div class="t lbl" style="left:1169px;top:271.5px;font-size:14.3px">Date:</div>
<div class="blk face" style="left:993.5px;top:286px;width:115.5px;height:25.5px"></div>
<div class="blk face" style="left:1121px;top:286px;width:129.5px;height:25.5px"></div>
<div class="cb" style="left:1263px;top:289px"></div>
<div class="t b maroon" style="left:1280.5px;top:286px;font-size:14.4px;">Suspended</div>

<!-- approved capability -->
<div class="grp" style="left:625px;top:447.7px;width:759.6px;height:130.6px"></div>
<div class="lav" style="left:630.5px;top:444px;width:147px;height:8px"></div>
<div class="t b" style="left:633px;top:441.5px;font-size:14.2px;color:#00004E;letter-spacing:-0.07px">Approved Capability:</div>
<div class="t lbl" style="left:846.8px;top:451.8px;font-size:14.3px;letter-spacing:-0.42px">Notes:</div>
<div class="cb" style="left:909px;top:453.5px;width:11.5px;height:11.5px"></div>
<div class="t b maroon" style="left:926px;top:453.3px;font-size:11.6px;-webkit-text-stroke:0.3px #800000;letter-spacing:0.71px">Merge Capability</div>
<div class="t b" style="left:641.6px;top:472.7px;font-size:14.3px;color:#111;letter-spacing:-0.21px">Overhaul</div>
<div class="t b" style="left:641.6px;top:499.2px;font-size:14.3px;color:#111;letter-spacing:-0.20px">Modification</div>
<div class="t b" style="left:641.6px;top:525.7px;font-size:14.3px;color:#111;letter-spacing:-0.15px">Repair</div>
<div class="t b" style="left:641.6px;top:552.7px;font-size:14.3px;color:#111;letter-spacing:-0.18px">Inspection</div>
<div class="cb" style="left:785.4px;top:474.8px;width:11.2px;height:11.2px"></div>
<div class="cb" style="left:785.4px;top:501.3px;width:11.2px;height:11.2px"></div>
<div class="cb" style="left:785.4px;top:527.8px;width:11.2px;height:11.2px"></div>
<div class="cb" style="left:785.4px;top:554.8px;width:11.2px;height:11.2px"></div>
<div class="blk nb" style="left:823.5px;top:467.4px;width:555.5px;height:25px;background:#fff"></div>
<div class="blk nb" style="left:823.5px;top:494.1px;width:555.5px;height:25px;background:#fff"></div>
<div class="blk nb" style="left:823.5px;top:520.7px;width:555.5px;height:25px;background:#fff"></div>
<div class="blk nb" style="left:823.5px;top:547.4px;width:555.5px;height:25px;background:#fff"></div>

<!-- remarks -->
<div class="t lbl" style="left:639.3px;top:590.8px;font-size:14.3px;letter-spacing:-0.36px">Remarks:</div>
<div class="blk" style="left:625px;top:606px;width:768px;height:138px;background:#fff"></div>
<div class="t val" style="left:627px;top:609.5px;font-size:14.05px">DC Sulpfuric acid anodizing (SAA) of aluminum alloys</div>

<!-- callout -->
<svg style="left:980px;top:170px" width="140" height="160" viewBox="980 170 140 160">
<path d="M996.5 182.5 L1073.5 311 L1105 288 Z" fill="#0A9BFF"/>
<circle cx="1088" cy="298.8" r="20.2" fill="#fff" stroke="#2a2a2a" stroke-width="1.1"/>
<circle cx="1088" cy="298.8" r="18.7" fill="#0A9BFF"/>
<text x="1088.3" y="306.7" text-anchor="middle" font-family="'DejaVu Sans','Liberation Sans',sans-serif" font-weight="bold" font-size="17.8" fill="#fff">6</text>
</svg>

</div>
</body></html>
